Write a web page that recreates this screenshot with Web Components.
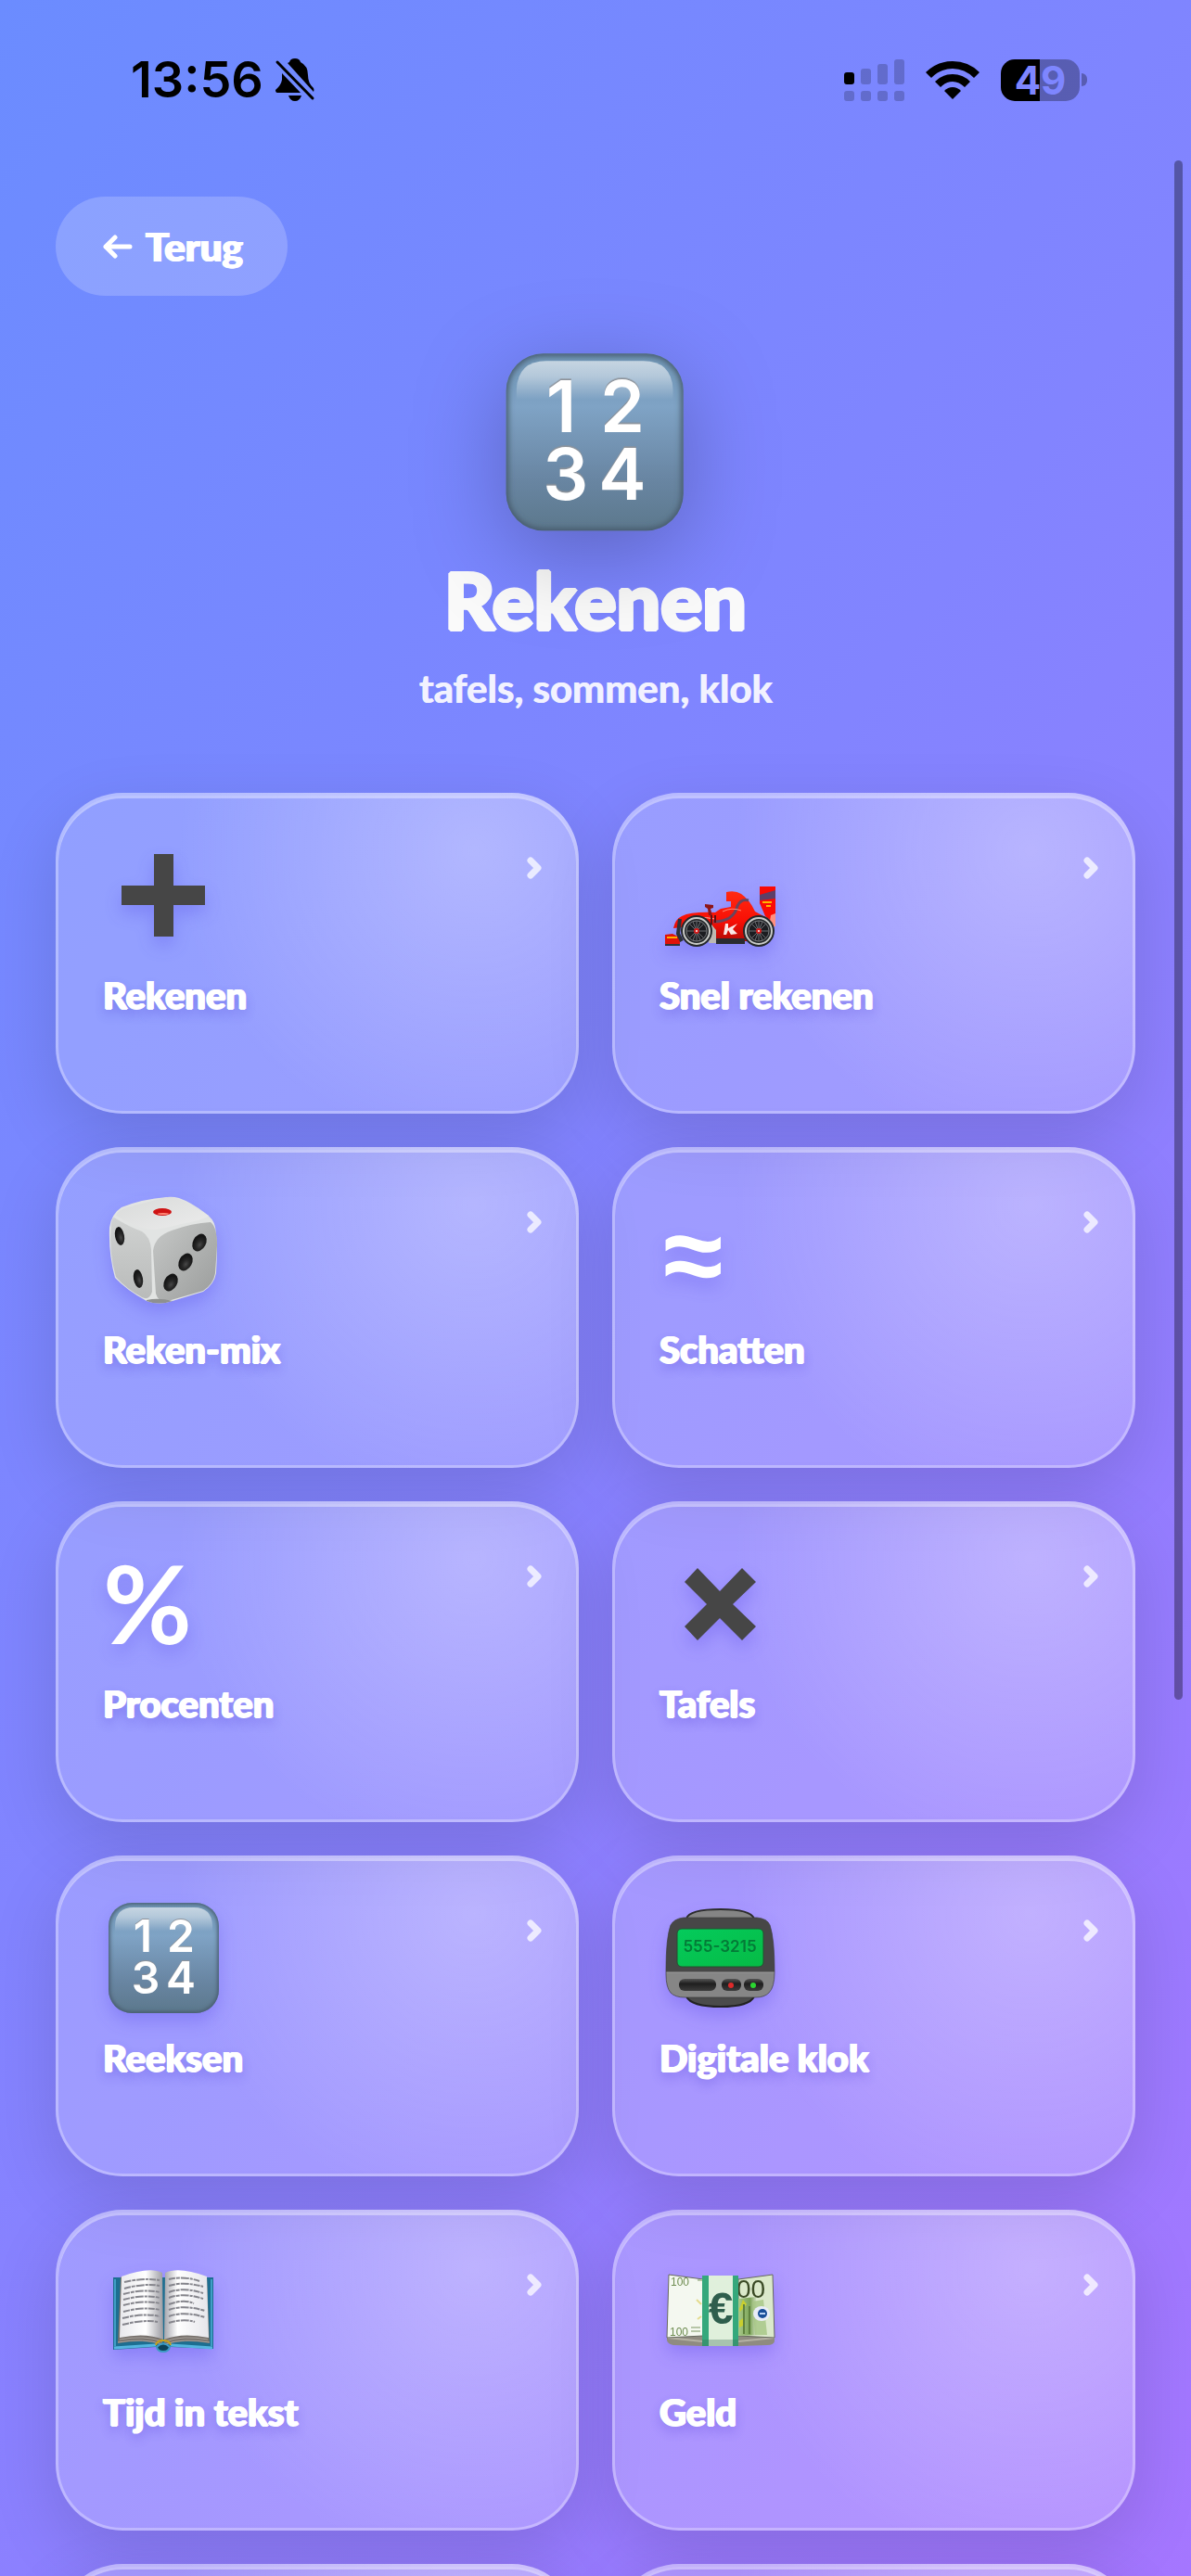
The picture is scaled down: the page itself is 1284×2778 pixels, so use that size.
<!DOCTYPE html>
<html lang="nl">
<head>
<meta charset="utf-8">
<meta name="viewport" content="width=device-width, initial-scale=1">
<title>Rekenen</title>
<style>
  html, body { margin: 0; height: 100%; }
  body {
    background: linear-gradient(125deg, #6b8cff 0%, #8284ff 45%, #a576ff 100%);
    color: #fff;
    font-family: Lato, sans-serif;
    overflow: hidden;
  }
</style>
</head>
<body>
<geoff-app></geoff-app>

<script>
const ICONS = {
  numbers: `
    <defs>
      <linearGradient id="body" x1="0" y1="0" x2="0" y2="1">
        <stop offset="0" stop-color="#6f95b5"/><stop offset=".3" stop-color="#7fa3c5"/>
        <stop offset=".7" stop-color="#6986a3"/><stop offset="1" stop-color="#5c788c"/>
      </linearGradient>
      <linearGradient id="gloss" x1="0" y1="0" x2="0" y2="1">
        <stop offset="0" stop-color="#fff" stop-opacity=".6"/><stop offset=".4" stop-color="#fff" stop-opacity=".45"/>
        <stop offset="1" stop-color="#fff" stop-opacity="0"/>
      </linearGradient>
      <filter id="soft"><feGaussianBlur stdDeviation="2"/></filter>
      <clipPath id="key"><rect x="6" y="7" width="119" height="119" rx="25"/></clipPath>
    </defs>
    <rect x="6" y="7" width="119" height="119" rx="25" fill="url(#body)"/>
    <g clip-path="url(#key)">
      <rect x="5" y="6" width="121" height="121" rx="26" fill="none" stroke="#45596b" stroke-width="5" filter="url(#soft)"/>
    </g>
    <path d="M13 38V31Q14 12 33 12H98Q117 12 118 31V38Z" fill="url(#gloss)"/>
    <g font-family="Inter, sans-serif" font-weight="600" font-size="48" text-anchor="middle" fill="#fff" style="filter: drop-shadow(0 -1px #8d9299)">
      <text x="43" y="60">1</text><text x="84" y="60">2</text><text x="46" y="105">3</text><text x="84" y="105">4</text>
    </g>`,
  plus: `<path d="M55 22H76V56H110V77H76V111H55V77H20V56H55Z" fill="#464646"/>`,
  times: `<path d="M41 28 65 53 89 28 104 43 79 67 104 91 89 106 65 82 41 106 27 91 51 67 27 43Z" fill="#464646"/>`,
  percent: `<text x="0" y="110" font-family="Lato, sans-serif" font-weight="700" font-size="117" fill="#fff">%</text>`,
  approx: `<text x="4" y="113" font-family="Liberation Sans, sans-serif" font-weight="700" font-size="117" fill="#fff">≈</text>`,
  car: `
    <defs>
      <linearGradient id="red" x1="0" y1="0" x2="0" y2="1">
        <stop offset="0" stop-color="#ff2a12"/><stop offset=".6" stop-color="#f80f05"/><stop offset="1" stop-color="#b30a06"/>
      </linearGradient>
    </defs>
    <path d="M108 57H125V98L114 89 108 75Z" fill="#fa0a05"/>
    <path d="M108 66 125 61V70L108 72Z" fill="#5e3f66"/>
    <path d="M111 74h10M115 78h5" stroke="#ffb400" stroke-width="2"/>
    <path d="M120 88 125 86V100H118Z" fill="#ff8f80"/>
    <path d="M6 109 14 108 22 112V121H6Z" fill="#e01208"/>
    <path d="M6 120H22" stroke="#30343a" stroke-width="2"/>
    <path d="M8 112h11" stroke="#ffae00" stroke-width="2"/>
    <path d="M15 102Q17 92 24 89 34 84 60 85L66 81 77 79 77 73 72 73V63Q82 61 88 65 97 71 103 84L116 91 108 116H58L52 98Z" fill="url(#red)"/>
    <path d="M22 92 20 108 24 116" stroke="#2c3138" stroke-width="4" fill="none"/>
    <path d="M28 94Q40 88 60 92" stroke="#ffb0a0" stroke-width="1" fill="none"/>
    <path d="M58 95Q80 95 84 78 88 70 96 72" stroke="#69455c" stroke-width="3" fill="none"/>
    <path d="M68 84Q78 79 88 83" stroke="#ff8a78" stroke-width="1" fill="none"/>
    <path d="M49 76 58 77V80L55 81 57 89 53 88 52 81 49 79Z" fill="#8e1518"/>
    <path d="M56 88V104M60 88V96" stroke="#5c1013" stroke-width="2"/>
    <path d="M56 98 61 104V118H53Z" fill="#bdb9b2"/>
    <path d="M61 113H92V119H61Z" fill="#2a2c31"/>
    <path d="M71 97 74 97 74 102 84 97 79 103 84 108 77 109 74 104 72 109 69 109Z" fill="#fff" opacity=".9"/>
    <g><circle cx="40" cy="105" r="17" fill="#25282b"/><circle cx="40" cy="105" r="14" fill="none" stroke="#c9cbc8" stroke-width="2"/><circle cx="40" cy="105" r="11" fill="#1b1c20" stroke="#77797c"/>
    <path d="M40 94V116M29 105H51M32 97 48 113M48 97 32 113M36 95 44 115M44 95 36 115" stroke="#6d6f73" stroke-width="1"/><circle cx="40" cy="105" r="3" fill="#d41c1c"/><circle cx="40" cy="105" r="1" fill="#fff"/></g>
    <g><circle cx="107" cy="105" r="17" fill="#25282b"/><circle cx="107" cy="105" r="14" fill="none" stroke="#c9cbc8" stroke-width="2"/><circle cx="107" cy="105" r="11" fill="#1b1c20" stroke="#77797c"/>
    <path d="M107 94V116M96 105H118M99 97 115 113M115 97 99 113M103 95 111 115M111 95 103 115" stroke="#6d6f73" stroke-width="1"/><circle cx="107" cy="105" r="3" fill="#d41c1c"/><circle cx="107" cy="105" r="1" fill="#fff"/></g>`,
  dice: `
    <defs>
      <linearGradient id="top" x1="0" y1="0" x2="1" y2="1"><stop offset="0" stop-color="#d8dad9"/><stop offset="1" stop-color="#ececec"/></linearGradient>
      <linearGradient id="left" x1="0" y1="0" x2="0" y2="1"><stop offset="0" stop-color="#d0d2d1"/><stop offset="1" stop-color="#b9bbba"/></linearGradient>
      <linearGradient id="right" x1="0" y1="0" x2="1" y2="1"><stop offset="0" stop-color="#c6c8c7"/><stop offset="1" stop-color="#9a9c9b"/></linearGradient>
      <radialGradient id="pip" cx=".6" cy=".6"><stop offset="0" stop-color="#484848"/><stop offset=".5" stop-color="#262626"/><stop offset="1" stop-color="#151515"/></radialGradient>
    </defs>
    <path d="M69 10Q75 9 82 11 94 15 110 27 119 33 121 42 124 62 122 92 120 104 108 112L75 122Q60 127 47 122 25 110 13 97 6 72 7 43 9 28 20 21 42 12 69 10Z" fill="#e2e4e3"/>
    <path d="M12 32Q28 42 42 47 51 53 52 66L53 112Q50 122 42 118 24 108 14 96 6 70 9 38 10 32 12 32Z" fill="url(#left)"/>
    <path d="M54 68Q56 52 74 46 96 38 116 37 123 42 123 62L121 92Q119 104 108 111L70 122Q60 124 57 114Z" fill="url(#right)"/>
    <path d="M14 30Q16 23 30 20L69 10Q78 10 88 15L114 30Q108 35 84 39 66 44 55 45 40 45 14 30Z" fill="url(#top)"/>
    <path d="M47 121Q60 118 75 122 60 127 47 122Z" fill="#8e908f"/>
    <ellipse cx="64" cy="26" rx="10" ry="4" fill="#cf1313"/><ellipse cx="65" cy="28" rx="6" ry="1" fill="#ff8676"/>
    <g fill="url(#pip)">
      <ellipse cx="18" cy="52" rx="5" ry="10" transform="rotate(-10 18 52)"/><ellipse cx="38" cy="98" rx="5" ry="10" transform="rotate(-10 38 98)"/>
      <ellipse cx="104" cy="59" rx="7" ry="10" transform="rotate(28 104 59)"/><ellipse cx="89" cy="80" rx="7" ry="10" transform="rotate(28 89 80)"/><ellipse cx="73" cy="102" rx="7" ry="10" transform="rotate(28 73 102)"/>
    </g>`,
  pager: `
    <defs>
      <linearGradient id="btn" x1="0" y1="0" x2="0" y2="1"><stop offset="0" stop-color="#565656"/><stop offset=".4" stop-color="#1f1f1f"/><stop offset="1" stop-color="#3c3c3c"/></linearGradient>
      <linearGradient id="lcd" x1="0" y1="0" x2="1" y2="1"><stop offset="0" stop-color="#04cb5c"/><stop offset="1" stop-color="#06bb45"/></linearGradient>
      <clipPath id="case"><path d="M7 80Q7 45 12 31 16 24 26 23H105Q116 24 119 31 124 46 124 82 124 98 118 104 113 109 104 109H27Q17 109 12 104 7 98 7 84Z"/></clipPath>
    </defs>
    <path d="M29 24Q32 14 66 14 98 14 102 24L98 27H33Z" fill="#858585" stroke="#2c2c2c" stroke-width="2"/>
    <path d="M29 108Q34 119 66 119 97 119 102 108Z" fill="#4b4b4b" stroke="#222" stroke-width="2"/>
    <g clip-path="url(#case)">
      <rect x="6" y="22" width="120" height="60" fill="#474747"/><rect x="6" y="82" width="120" height="28" fill="#868686"/>
      <path d="M6 82H125" stroke="#9c9c9c"/>
    </g>
    <path d="M7 80Q7 45 12 31 16 24 26 23H105Q116 24 119 31 124 46 124 82 124 98 118 104 113 109 104 109H27Q17 109 12 104 7 98 7 84Z" fill="none" stroke="#3f3f3f" opacity=".7"/>
    <rect x="19" y="35" width="93" height="41" rx="5" fill="url(#lcd)" stroke="#22532f"/>
    <text x="65" y="60" font-family="Inter, sans-serif" font-weight="600" font-size="17" text-anchor="middle" fill="#047a37">555-3215</text>
    <rect x="21" y="89" width="40" height="13" rx="6" fill="url(#btn)"/>
    <rect x="67" y="89" width="21" height="13" rx="6" fill="url(#btn)"/>
    <rect x="91" y="89" width="21" height="13" rx="6" fill="url(#btn)"/>
    <circle cx="77" cy="96" r="3" fill="#dc2a2a"/><circle cx="101" cy="96" r="3" fill="#2bd631"/>`,
  book: `
    <defs>
      <linearGradient id="pl" x1="0" x2="1"><stop offset="0" stop-color="#e8e8ec"/><stop offset=".6" stop-color="#fff"/><stop offset="1" stop-color="#9b9ba2"/></linearGradient>
      <linearGradient id="pr" x1="0" x2="1"><stop offset="0" stop-color="#a5a5ac"/><stop offset=".3" stop-color="#fff"/><stop offset="1" stop-color="#e5e5ea"/></linearGradient>
    </defs>
    <path d="M11 29H119V106L73 104Q65 110 57 104L11 107Z" fill="#1d6e91"/>
    <path d="M12 105 57 102M73 102 118 105" stroke="#54b5e0" stroke-width="3"/>
    <path d="M13 31V103M117 31V103" stroke="#3f9fc6" stroke-width="2"/>
    <path d="M19 28 16 100Q45 95 64 102V94ZM112 28 115 100Q86 95 66 102V94Z" fill="#77716c"/>
    <path d="M16 99Q45 94 64 101M115 99Q86 94 67 101M18 96Q45 91 64 98M113 96Q86 91 67 98" fill="none" stroke="#aaa49e" stroke-width="1"/>
    <path d="M20 28Q50 17 64 24L65 96Q46 88 18 94Z" fill="url(#pl)"/>
    <path d="M112 28Q82 17 67 24L66 96Q85 88 114 94Z" fill="url(#pr)"/>
    <g stroke="#85858c" stroke-width="2" stroke-dasharray="7 1 4 1 9 1 3 1" fill="none">
      <path d="M23 34Q45 29 61 32M23 41Q45 35 61 38M22 47Q45 41 61 45M22 53Q45 47 61 51M22 59Q45 53 61 57M22 66Q45 60 61 64M21 73Q45 67 61 71M21 80Q45 74 59 77"/>
      <path d="M71 31Q87 27 104 33M71 38Q87 33 108 39M71 45Q87 39 108 46M71 51Q87 45 108 52M71 58Q87 52 98 57M71 64Q87 58 110 65M71 71Q87 65 110 72M71 78Q87 73 99 77"/>
    </g>
    <path d="M57 102Q58 97 65 97 72 97 73 102" fill="none" stroke="#c9a318" stroke-width="2"/>
    <path d="M58 104Q65 97 72 104 71 109 65 109 59 109 58 104Z" fill="#0d4258" stroke="#3c9bc4" stroke-width="2"/>`,
  money: `
    <defs>
      <linearGradient id="note" x1="0" x2="1"><stop offset="0" stop-color="#a9c98a"/><stop offset=".6" stop-color="#7da55a"/><stop offset="1" stop-color="#e3ecd8"/></linearGradient>
    </defs>
    <path d="M8 92H124V98Q123 102 116 102L85 103H46L15 102Q9 101 8 97Z" fill="#8f8b80"/>
    <path d="M9 94 46 98M85 98 124 94" stroke="#b5b1a4" stroke-width="2"/>
    <path d="M10 26 47 31V92L8 94Z" fill="#f4f8f0" stroke="#66695e"/>
    <path d="M85 31 122 26 124 94 85 92Z" fill="#dbe9cb" stroke="#66695e"/>
    <path d="M85 52 104 50 106 91 85 92Z" fill="url(#note)"/>
    <path d="M100 55 112 53 116 91 103 91Z" fill="#a5c683" opacity=".8"/>
    <path d="M86 63 90 53 94 58 87 66ZM86 76 90 73 92 80 86 83Z" fill="#c9cf2f"/>
    <path d="M91 58V90M97 60V90" stroke="#5f823f" stroke-width="2"/>
    <path d="M40 53 45 58M41 74 45 71" stroke="#e4dc8f" stroke-width="2"/>
    <ellipse cx="110" cy="68" rx="9" ry="8" fill="#e8edf8"/><circle cx="111" cy="68" r="5" fill="#194f99"/><path d="M108 68h6" stroke="#b9d2f5" stroke-width="2"/>
    <g font-family="Liberation Sans, sans-serif">
      <text x="12" y="38" font-size="12" fill="#6f8d52">100</text>
      <text x="11" y="92" font-size="12" fill="#6f8d52">100</text>
      <text x="83" y="51" font-size="28" fill="#3b4b26">00</text>
    </g>
    <path d="M34 83h10M34 87h10M41 32h5" stroke="#b7c6a8" stroke-width="2"/>
    <path d="M46 27H85V103H46Z" fill="#35a87c"/>
    <path d="M53 27H79V103H53Z" fill="#e0f0dc"/>
    <path d="M46 96H85V103H46Z" fill="#3b705b" opacity=".35"/>
    <text x="66" y="79" font-family="Liberation Sans, sans-serif" font-weight="700" font-size="48" text-anchor="middle" fill="#2f5e4d">€</text>`
};

/** <geoff-icon name="dice"> draws one of the pictures in ICONS. */
class GeoffIcon extends HTMLElement {
  constructor() {
    super();
    this.attachShadow({ mode: 'open' });
  }

  connectedCallback() {
    this.shadowRoot.innerHTML = `
      <style>
        :host { display: block; }
        svg { display: block; width: 100%; height: 100%; overflow: visible; }
      </style>
      <svg viewBox="0 0 132 132" role="presentation">${ICONS[this.getAttribute('name')] || ''}</svg>`;
  }
}

class GeoffStatusBar extends HTMLElement {
  constructor() {
    super();
    this.attachShadow({ mode: 'open' });
  }

  connectedCallback() {
    this.shadowRoot.innerHTML = `
      <style>
        :host {
          display: flex; justify-content: space-between; align-items: center;
          height: 48px; padding: 62px 112px 62px 141px;
          color: #000; font-family: Inter, sans-serif;
        }
        .left { display: flex; align-items: center; gap: 12px; }
        .right { display: flex; align-items: center; gap: 23px; }
        time { font-size: 54px; font-weight: 600; line-height: 54px; }
        svg { display: block; }
        .battery { display: flex; align-items: center; gap: 2px; }
        .cell {
          width: 85px; height: 45px; border-radius: 15px; text-align: center;
          font-size: 42px; font-weight: 700; line-height: 45px; color: #7e86ff;
          background: linear-gradient(90deg, #000 50%, rgba(0, 0, 0, .3) 50%);
        }
        .nub { width: 6px; height: 14px; border-radius: 0 6px 6px 0; background: rgba(0, 0, 0, .3); }
      </style>
      <div class="left">
        <time>13:56</time>
        <svg width="44" height="46" viewBox="0 0 44 46">
          <path d="M14 5 16 4Q17 0 22 0 27 0 28 4 36 8 36 18 36 27 42 32 43 34 42 36Z"/>
          <path d="M8 16 28 37H3Q1 37 1 34 7 29 8 23Z"/>
          <path d="M15 40H29Q27 46 22 46 17 46 15 40Z"/>
          <path d="M3 4 41 43" stroke="#000" stroke-width="3" stroke-linecap="round"/>
        </svg>
      </div>
      <div class="right">
        <svg width="65" height="45" viewBox="0 0 65 45">
          <rect y="14" width="11" height="13" rx="3"/>
          <g fill-opacity=".2">
            <rect x="18" y="10" width="11" height="17" rx="3"/><rect x="36" y="5" width="11" height="22" rx="3"/><rect x="54" width="11" height="27" rx="3"/>
            <rect y="34" width="11" height="11" rx="3"/><rect x="18" y="34" width="11" height="11" rx="3"/><rect x="36" y="34" width="11" height="11" rx="3"/><rect x="54" y="34" width="11" height="11" rx="3"/>
          </g>
        </svg>
        <svg width="58" height="42" viewBox="0 0 58 42">
          <path d="M0 13Q12 1 29 1T58 13L52 19Q42 9 29 9T6 19Z"/>
          <path d="M10 23Q18 15 29 15T48 23L42 29Q36 23 29 23T16 29Z"/>
          <path d="M20 33Q24 29 29 29T38 33L29 42Z"/>
        </svg>
        <div class="battery"><div class="cell">49</div><div class="nub"></div></div>
      </div>`;
  }
}

class GeoffBackButton extends HTMLElement {
  constructor() {
    super();
    this.attachShadow({ mode: 'open' });
  }

  connectedCallback() {
    this.shadowRoot.innerHTML = `
      <style>
        :host { display: flex; }
        button {
          display: flex; align-items: center; gap: 14px;
          height: 107px; padding: 0 48px 0 51px; border: 0; border-radius: 54px;
          background: rgba(255, 255, 255, .2); color: #fff;
          font: 900 42px/48px Lato, sans-serif; cursor: pointer;
          text-shadow: 1px 0 #fff, -1px 0 #fff;
        }
        svg { display: block; }
      </style>
      <button type="button">
        <svg width="32" height="26" viewBox="0 0 32 26" fill="none" stroke="#fff" stroke-width="5" stroke-linecap="round" stroke-linejoin="round">
          <path d="M13 3 3 13 13 23M3 13H29"/>
        </svg>
        <slot></slot>
      </button>`;
  }
}

class GeoffHero extends HTMLElement {
  constructor() {
    super();
    this.attachShadow({ mode: 'open' });
  }

  connectedCallback() {
    this.shadowRoot.innerHTML = `
      <style>
        :host { display: flex; flex-direction: column; align-items: center; text-align: center; }
        geoff-icon { width: 212px; height: 212px; filter: drop-shadow(0 24px 48px rgba(0, 0, 0, .25)); }
        h1 {
          margin: 16px 0 20px; font-size: 84px; line-height: 98px; font-weight: 900; color: #fafafa;
          text-shadow: 2px 0 #fafafa, -2px 0 #fafafa, 0 2px #fafafa, 0 -2px #fafafa, 1px 1px #fafafa, -1px 1px #fafafa, 1px -1px #fafafa, -1px -1px #fafafa;
        }
        p { margin: 0; font-size: 42px; line-height: 52px; font-weight: 700; color: #f2f2ff; text-shadow: 1px 0 #f2f2ff; }
      </style>
      <geoff-icon name="numbers"></geoff-icon>
      <h1><slot name="title"></slot></h1>
      <p><slot></slot></p>`;
  }
}

class GeoffTile extends HTMLElement {
  constructor() {
    super();
    this.attachShadow({ mode: 'open' });
  }

  connectedCallback() {
    this.shadowRoot.innerHTML = `
      <style>
        :host { display: block; }
        a {
          display: flex; flex-direction: column; gap: 19px; box-sizing: border-box;
          min-height: 346px; padding: 41px 37px 41px 48px;
          border: 3px solid rgba(255, 255, 255, .3); border-radius: 72px;
          background:
            radial-gradient(circle at 80% 18%, rgba(255, 255, 255, .26), transparent 60%) border-box,
            linear-gradient(rgba(255, 255, 255, .2), rgba(255, 255, 255, .2)) border-box;
          box-shadow: inset 0 3px rgba(255, 255, 255, .38), 0 24px 72px rgba(0, 0, 0, .13);
          color: #fff; text-decoration: none;
        }
        .top { display: flex; justify-content: space-between; align-items: flex-start; }
        geoff-icon { width: 132px; height: 132px; filter: drop-shadow(0 9px 9px rgba(60, 40, 220, .22)); }
        .chevron { display: block; margin-top: 25px; }
        .label {
          font-size: 40px; line-height: 46px; font-weight: 900;
          text-shadow: 1px 0 #fff, -1px 0 #fff, 0 1px #fff, 0 6px 12px rgba(60, 40, 200, .3);
        }
      </style>
      <a href="#">
        <span class="top">
          <geoff-icon name="${this.getAttribute('icon') || ''}"></geoff-icon>
          <svg class="chevron" width="16" height="24" viewBox="0 0 16 24" fill="none" stroke="#fff" stroke-opacity=".75" stroke-width="7" stroke-linecap="round" stroke-linejoin="round">
            <path d="M4 4 12 12 4 20"/>
          </svg>
        </span>
        <span class="label"><slot></slot></span>
      </a>`;
  }
}

/** <geoff-app> is the page shell: status bar, header and the tile grid. */
class GeoffApp extends HTMLElement {
  constructor() {
    super();
    this.attachShadow({ mode: 'open' });
  }

  connectedCallback() {
    this.shadowRoot.innerHTML = `
      <style>
        :host { display: block; position: relative; height: 100vh; overflow: hidden; }
        main { padding: 40px 60px; }
        geoff-hero { margin-top: 51px; }
        .grid { display: grid; grid-template-columns: 1fr 1fr; gap: 36px; margin-top: 87px; }
        .thumb {
          position: absolute; right: 9px; top: 173px; bottom: 34%; width: 9px;
          border-radius: 5px; background: rgba(0, 0, 0, .35);
        }
      </style>
      <geoff-status-bar></geoff-status-bar>
      <main>
        <geoff-back-button>Terug</geoff-back-button>
        <geoff-hero><span slot="title">Rekenen</span>tafels, sommen, klok</geoff-hero>
        <div class="grid">
          <geoff-tile icon="plus">Rekenen</geoff-tile>
          <geoff-tile icon="car">Snel rekenen</geoff-tile>
          <geoff-tile icon="dice">Reken-mix</geoff-tile>
          <geoff-tile icon="approx">Schatten</geoff-tile>
          <geoff-tile icon="percent">Procenten</geoff-tile>
          <geoff-tile icon="times">Tafels</geoff-tile>
          <geoff-tile icon="numbers">Reeksen</geoff-tile>
          <geoff-tile icon="pager">Digitale klok</geoff-tile>
          <geoff-tile icon="book">Tijd in tekst</geoff-tile>
          <geoff-tile icon="money">Geld</geoff-tile>
          <geoff-tile></geoff-tile>
          <geoff-tile></geoff-tile>
        </div>
      </main>
      <div class="thumb"></div>`;
  }
}

customElements.define('geoff-icon', GeoffIcon);
customElements.define('geoff-status-bar', GeoffStatusBar);
customElements.define('geoff-back-button', GeoffBackButton);
customElements.define('geoff-hero', GeoffHero);
customElements.define('geoff-tile', GeoffTile);
customElements.define('geoff-app', GeoffApp);
</script>
</body>
</html>
